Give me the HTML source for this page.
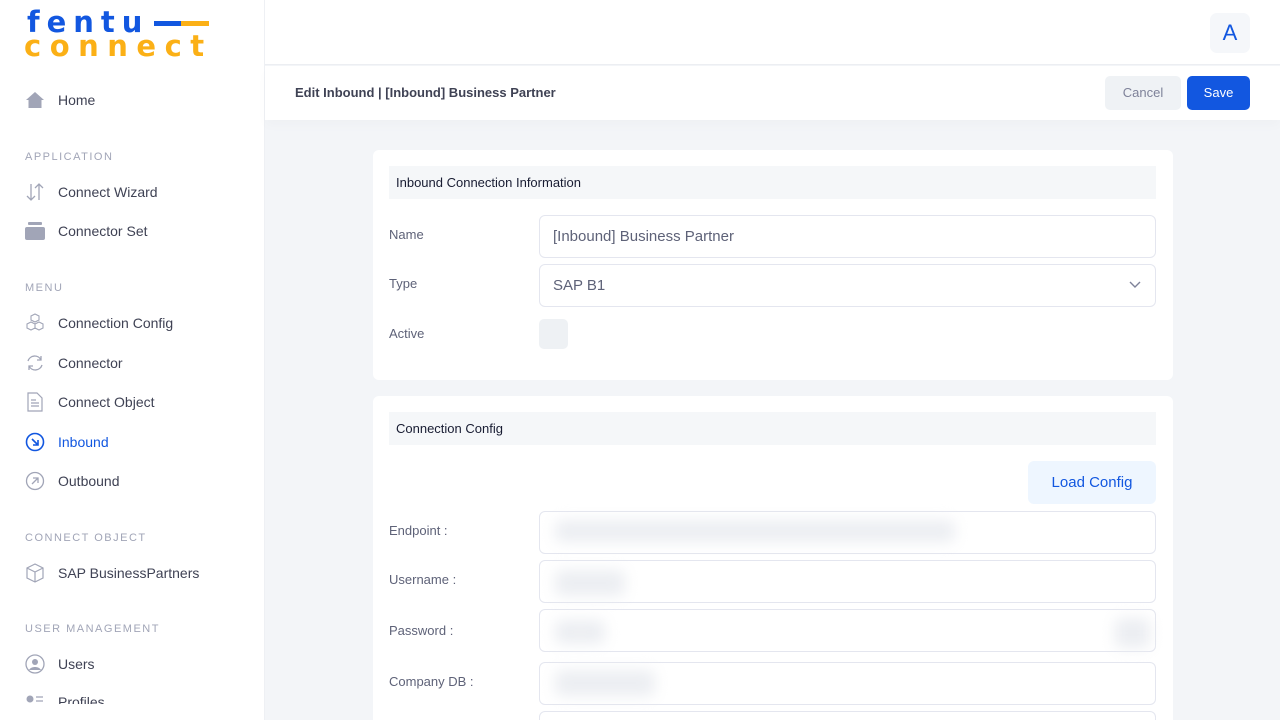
<!DOCTYPE html>
<html><head><meta charset="utf-8"><style>
*{box-sizing:border-box;margin:0;padding:0}
html,body{width:1280px;height:720px;overflow:hidden}
body{background:#f3f5f8;font-family:"Liberation Sans",sans-serif;position:relative;color:#3f4254}
.sb{position:absolute;left:0;top:0;width:265px;height:720px;background:#fff;border-right:1px solid #eef0f4}
.logo1{position:absolute;left:27px;top:5px;font-family:"DejaVu Sans",sans-serif;font-size:29px;font-weight:bold;color:#1257e0;letter-spacing:7px;line-height:34px}
.logo2{position:absolute;left:24px;top:29px;font-family:"DejaVu Sans",sans-serif;font-size:29px;font-weight:bold;color:#fbb016;letter-spacing:8.5px;line-height:34px}
.bar1{position:absolute;left:154px;top:21px;width:27px;height:5px;background:#1257e0}
.bar2{position:absolute;left:181px;top:21px;width:28px;height:5px;background:#fbb016}
.it{position:absolute;left:25px;height:20px;display:flex;align-items:center;font-size:14px;color:#3f4254}
.it svg{width:20px;height:20px;margin-right:13px}
.sec{position:absolute;left:25px;font-size:11px;letter-spacing:1.5px;color:#a1a5b7}
.top{position:absolute;left:265px;top:0;width:1015px;height:65px;background:#fff;border-bottom:1px solid #eceef2}
.av{position:absolute;left:1210px;top:13px;width:40px;height:40px;border-radius:7px;background:#f5f7fa;color:#1257e0;font-size:22px;text-align:center;line-height:40px}
.sub{position:absolute;left:265px;top:66px;width:1015px;height:54px;background:#fff;box-shadow:0 6px 10px rgba(0,0,0,.02)}
.sub h1{position:absolute;left:30px;top:19px;font-size:13px;font-weight:bold;color:#3f4254}
.btn{position:absolute;top:76px;height:34px;border-radius:5px;font-size:13px;text-align:center;line-height:34px}
.card{position:absolute;left:373px;width:800px;background:#fff;border-radius:6px;overflow:hidden}
.ch{position:absolute;left:16px;width:767px;height:33px;background:#f5f7f9;font-size:13px;color:#181c32;padding-left:7px;line-height:33px}
.lb{position:absolute;left:16px;font-size:13px;color:#5e6278}
.in{position:absolute;left:166px;width:617px;height:43px;border:1px solid #e4e6ef;border-radius:6px;font-size:15px;color:#5e6278;padding-left:13px;line-height:41px}
.bl{position:absolute;background:#eceef2;filter:blur(7px);border-radius:6px}
</style></head><body>
<div class="sb">
<div class="logo1">fentu</div><div class="bar1"></div><div class="bar2"></div>
<div class="logo2">connect</div>
<div class="it" style="top:90px"><svg viewBox="0 0 20 20"><path d="M10 2L1 10h2.5v8h13v-8H19z" fill="#a1a5b7"/></svg>Home</div>
<div class="sec" style="top:151px">APPLICATION</div>
<div class="it" style="top:182px"><svg viewBox="0 0 20 20" fill="none" stroke="#a1a5b7" stroke-width="1.3"><path d="M6 2v16M2 14l4 4 4-4M14 18V2M10 6l4-4 4 4"/></svg>Connect Wizard</div>
<div class="it" style="top:221px"><svg viewBox="0 0 20 20"><rect x="0" y="6" width="20" height="13" rx="2" fill="#a1a5b7"/><rect x="3" y="1" width="14" height="3" rx="1" fill="#a1a5b7"/></svg>Connector Set</div>
<div class="sec" style="top:282px">MENU</div>
<div class="it" style="top:313px"><svg viewBox="0 0 20 20" fill="none" stroke="#a1a5b7" stroke-width="1.1"><path d="M10 1l4 2v4l-4 2-4-2V3zM6 9l4 2v4l-4 2-4-2v-4zM14 9l4 2v4l-4 2-4-2v-4z"/></svg>Connection Config</div>
<div class="it" style="top:353px"><svg viewBox="0 0 20 20" fill="none" stroke="#a1a5b7" stroke-width="1.3"><path d="M3 8a7 7 0 0 1 13-1M17 12a7 7 0 0 1-13 1M16 3v4h-4M4 17v-4h4"/></svg>Connector</div>
<div class="it" style="top:392px"><svg viewBox="0 0 20 20" fill="none" stroke="#a1a5b7" stroke-width="1.2"><path d="M3 1h9l5 5v13H3zM6 11h8M6 14h8M6 8h5"/></svg>Connect Object</div>
<div class="it" style="top:432px;color:#1257e0"><svg viewBox="0 0 20 20" fill="none" stroke="#1257e0" stroke-width="1.6"><circle cx="10" cy="10" r="8.5"/><path d="M7 7l6 6M13 8v5H8"/></svg>Inbound</div>
<div class="it" style="top:471px"><svg viewBox="0 0 20 20" fill="none" stroke="#a1a5b7" stroke-width="1.3"><circle cx="10" cy="10" r="8.5"/><path d="M7 13l6-6M8 7h5v5"/></svg>Outbound</div>
<div class="sec" style="top:532px">CONNECT OBJECT</div>
<div class="it" style="top:563px"><svg viewBox="0 0 20 20" fill="none" stroke="#a1a5b7" stroke-width="1.2"><path d="M10 1l8 4v10l-8 4-8-4V5zM2 5l8 4 8-4M10 9v10"/></svg>SAP BusinessPartners</div>
<div class="sec" style="top:623px">USER MANAGEMENT</div>
<div class="it" style="top:654px"><svg viewBox="0 0 20 20"><circle cx="10" cy="10" r="9" fill="none" stroke="#a1a5b7" stroke-width="1.3"/><circle cx="10" cy="8" r="3" fill="#a1a5b7"/><path d="M4 16c2-4 10-4 12 0" fill="#a1a5b7"/></svg>Users</div>
<div class="it" style="top:694px;height:10px;overflow:hidden;align-items:flex-start"><svg viewBox="0 0 20 20"><circle cx="5" cy="5" r="3.5" fill="#a1a5b7"/><path d="M11 3h7M11 7h7" stroke="#a1a5b7" stroke-width="1.3"/></svg>Profiles</div>
</div>
<div class="top"></div>
<div class="av">A</div>
<div class="sub"><h1>Edit Inbound | [Inbound] Business Partner</h1></div>
<div class="btn" style="left:1105px;width:76px;background:#eff2f5;color:#7e8299">Cancel</div>
<div class="btn" style="left:1187px;width:63px;background:#1257e0;color:#fff">Save</div>

<div class="card" style="top:150px;height:230px">
<div class="ch" style="top:16px">Inbound Connection Information</div>
<div class="lb" style="top:77px">Name</div>
<div class="in" style="top:65px">[Inbound] Business Partner</div>
<div class="lb" style="top:126px">Type</div>
<div class="in" style="top:114px">SAP B1<svg style="position:absolute;right:14px;top:16px" width="12" height="8" viewBox="0 0 12 8" fill="none" stroke="#7e8299" stroke-width="1.4"><path d="M1 1l5 5 5-5"/></svg></div>
<div class="lb" style="top:176px">Active</div>
<div style="position:absolute;left:166px;top:169px;width:29px;height:30px;border-radius:5px;background:#eef1f4"></div>
</div>

<div class="card" style="top:396px;height:324px;border-radius:6px 6px 0 0">
<div class="ch" style="top:16px">Connection Config</div>
<div style="position:absolute;left:655px;top:65px;width:128px;height:43px;border-radius:6px;background:#eef6ff;color:#1257e0;font-size:15px;text-align:center;line-height:43px">Load Config</div>
<div class="lb" style="top:127px">Endpoint :</div>
<div class="in" style="top:115px"></div>
<div class="lb" style="top:176px">Username :</div>
<div class="in" style="top:164px"></div>
<div class="lb" style="top:227px">Password :</div>
<div class="in" style="top:213px"></div>
<div class="lb" style="top:278px">Company DB :</div>
<div class="in" style="top:266px"></div>
<div class="in" style="top:315px"></div>
</div>
<div class="bl" style="left:555px;top:520px;width:400px;height:22px"></div>
<div class="bl" style="left:555px;top:570px;width:70px;height:26px"></div>
<div class="bl" style="left:555px;top:620px;width:50px;height:24px"></div>
<div class="bl" style="left:1115px;top:618px;width:35px;height:30px"></div>
<div class="bl" style="left:555px;top:670px;width:100px;height:26px"></div>
</body></html>
